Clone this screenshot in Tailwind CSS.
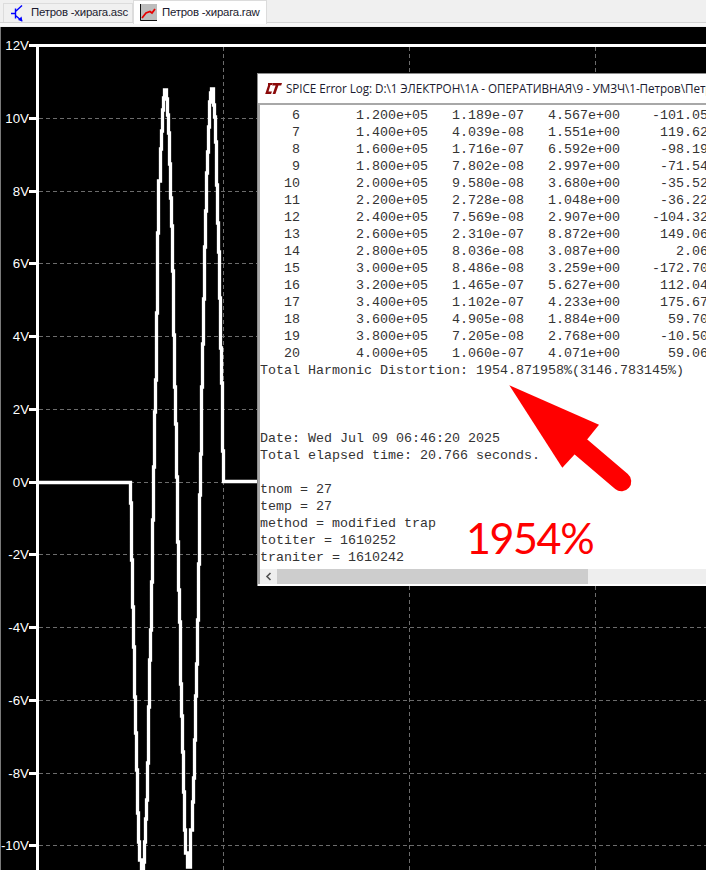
<!DOCTYPE html>
<html lang="ru">
<head>
  <meta charset="UTF-8" />
  <meta name="viewport" content="width=device-width, initial-scale=1" />
  <title>SPICE Error Log</title>
  <script src="https://cdn.jsdelivr.net/npm/@tailwindcss/browser@4"></script>
</head>
<body class="bg-black overflow-hidden">
  <div class="w-[706px] h-[870px] flex flex-col overflow-hidden">

    <!-- Tabs -->
    <div class="h-[27px] shrink-0 bg-[#f0f0f0] relative font-['Liberation_Sans',sans-serif] text-[11.4px] tracking-[-0.22px] text-[#1a1a2e]">
      <div class="flex items-start h-[23px] border-b border-[#d4d4d4]">
        <div class="mt-[3px] ml-[3px] w-[130px] h-[19px] flex items-center border border-b-0 border-[#dcdcdc] bg-[#f0f0f0]">
          <svg class="ml-[7px] w-[12px] h-[17px] shrink-0" viewBox="0 0 12 17" fill="none" stroke="#0000ff" stroke-width="1.4">
            <path d="M0 8.5H4M4.5 3.5V13.5M4.5 6.5L11 0.5M4.5 10.5L11 16" />
            <path d="M7 15L11.5 16.5L10.5 11.5Z" fill="#0000ff" stroke="none" />
          </svg>
          <span class="ml-[8px] whitespace-nowrap">Петров -хирага.asc</span>
        </div>
        <div class="w-[134px] h-[24px] flex items-center bg-white border border-b-0 border-[#dcdcdc]">
          <svg class="ml-[6px] w-[17px] h-[17px] shrink-0" viewBox="0 0 17 17" fill="none">
            <rect width="17" height="17" fill="#bdbdbd" />
            <path d="M0.5 0V16.5H17" stroke="#111" stroke-width="1" />
            <path d="M2 14L6 9L10 7.5L12 9L15 5" stroke="#e80000" stroke-width="1.8" />
          </svg>
          <span class="ml-[5px] whitespace-nowrap">Петров -хирага.raw</span>
        </div>
      </div>
      <div class="h-[3px] bg-[#f7f7f7]"></div>
    </div>

    <!-- Plot pane -->
    <div class="relative flex-1 bg-black border-l border-[#7a7a7a]">
      <svg class="absolute -left-px top-0 w-[706px] h-[843px] font-['Liberation_Sans',sans-serif]" viewBox="0 27 706 843">
        <g stroke="#6c6c6c" stroke-dasharray="4 3" shape-rendering="crispEdges">
          <path d="M39 118.5H706M39 191.5H706M39 263.5H706M39 336.5H706M39 409.5H706M39 482.5H706M39 554.5H706M39 627.5H706M39 700.5H706M39 773.5H706M39 845.5H706" />
          <path d="M223.5 47V870M409.5 47V870M595.5 47V870" />
        </g>
        <g stroke="#fff" stroke-width="3" fill="none">
          <path d="M29 45.5H706M37.5 45V870" />
          <path d="M29 118.5H37M29 191.5H37M29 263.5H37M29 336.5H37M29 409.5H37M29 482.5H37M29 554.5H37M29 627.5H37M29 700.5H37M29 773.5H37M29 845.5H37" />
          <path stroke-width="3.3" d="M38 482.5H130.5V503H131.5V560H132.5V607H133.5V647H134.5V697H135.5V733H136.5V770H137.5V813H138.5V842H139.5V860H141.5V870H143.5V862H144.5V842H145.5V819H146.5V800H147.5V763H148.5V707H149.5V660H150.5V630H151.5V582H152.5V520H153.5V467H154.5V412H155.5V380H156.5V313H157.5V233H158.5V181H160.5V149H161.5V131H162.5V110H163.5V98H164.5V90H166.5V99H167.5V115H168.5V133H169.5V164H170.5V198H171.5V226H172.5V271H173.5V335H174.5V387H175.5V424H176.5V477H177.5V542H178.5V590H179.5V622H180.5V684H181.5V716H182.5V752H183.5V792H184.5V830H185.5V853H187.5V867H190.5V830H192.5V802H193.5V778H194.5V740H195.5V696H196.5V664H197.5V620H198.5V564H199.5V495H200.5V454H201.5V387H202.5V344H203.5V299H204.5V247H205.5V211H206.5V173H207.5V152H208.5V127H209.5V102H210.5V93H211.5V89H213.5V105H214.5V117H215.5V142H216.5V185H217.5V223H218.5V252H219.5V298H220.5V348H221.5V383H222.5V451H223.5V481.5H258" />
        </g>
        <g fill="#fff" font-size="13.3" text-anchor="end">
          <text x="29" y="50">12V</text>
          <text x="29" y="123">10V</text>
          <text x="29" y="196">8V</text>
          <text x="29" y="268">6V</text>
          <text x="29" y="341">4V</text>
          <text x="29" y="414">2V</text>
          <text x="29" y="487">0V</text>
          <text x="29" y="559">-2V</text>
          <text x="29" y="632">-4V</text>
          <text x="29" y="705">-6V</text>
          <text x="29" y="778">-8V</text>
          <text x="29" y="850">-10V</text>
        </g>
      </svg>

      <!-- SPICE Error Log window -->
      <div class="absolute left-[256px] top-[46px] w-[449px] h-[513px] bg-white border-t border-l border-[#8c8c8c] flex flex-col">
        <div class="h-[29px] shrink-0 flex items-center pl-[7px] overflow-hidden">
          <svg class="w-[17px] h-[11px] shrink-0" viewBox="0 0 17 11" fill="#8b0a0a">
            <path d="M3 0H8L7 2H5.5L3.5 8.5H7L6 11H0.2L3 2.5Z" />
            <path d="M8 0H17L16.2 2.5H13.4L10.4 11H7.6L10.6 2.5H7.2Z" />
          </svg>
          <span class="ml-[4px] whitespace-nowrap font-['Open_Sans',sans-serif] text-[11.7px] tracking-[-0.06px] text-[#1a1a2e]">SPICE Error Log: D:\1 ЭЛЕКТРОН\1А - ОПЕРАТИВНАЯ\9 - УМЗЧ\1-Петров\Петров -хирага.log</span>
        </div>
        <div class="flex-1 flex flex-col min-h-0 border-t-2 border-l-2 border-[#a8a8a8] mb-[2px]">
          <pre class="flex-1 overflow-hidden pt-[2px] font-['Liberation_Mono',monospace] text-[13.33px] leading-[17px] text-[#333333]">    6       1.200e+05   1.189e-07   4.567e+00    -101.05
    7       1.400e+05   4.039e-08   1.551e+00     119.62
    8       1.600e+05   1.716e-07   6.592e+00     -98.19
    9       1.800e+05   7.802e-08   2.997e+00     -71.54
   10       2.000e+05   9.580e-08   3.680e+00     -35.52
   11       2.200e+05   2.728e-08   1.048e+00     -36.22
   12       2.400e+05   7.569e-08   2.907e+00    -104.32
   13       2.600e+05   2.310e-07   8.872e+00     149.06
   14       2.800e+05   8.036e-08   3.087e+00       2.06
   15       3.000e+05   8.486e-08   3.259e+00    -172.70
   16       3.200e+05   1.465e-07   5.627e+00     112.04
   17       3.400e+05   1.102e-07   4.233e+00     175.67
   18       3.600e+05   4.905e-08   1.884e+00      59.70
   19       3.800e+05   7.205e-08   2.768e+00     -10.50
   20       4.000e+05   1.060e-07   4.071e+00      59.06
Total Harmonic Distortion: 1954.871958%(3146.783145%)



Date: Wed Jul 09 06:46:20 2025
Total elapsed time: 20.766 seconds.

tnom = 27
temp = 27
method = modified trap
totiter = 1610252
traniter = 1610242</pre>
          <div class="h-[15px] shrink-0 flex bg-[#eeeeee]">
            <div class="w-[17px] flex items-center justify-center">
              <svg class="w-[7px] h-[9px]" viewBox="0 0 7 9" fill="none" stroke="#505050" stroke-width="1.6"><path d="M5.5 1L2 4.5L5.5 8" /></svg>
            </div>
            <div class="w-[311px] bg-[#cdcdcd]"></div>
          </div>
        </div>
      </div>

      <!-- Red annotation -->
      <svg class="absolute -left-px top-0 w-[706px] h-[843px] pointer-events-none" viewBox="0 27 706 843">
        <path d="M509.3 385.3L599 424.7L587.3 439.3L575 454L562.3 467.7Z" fill="#ff0000" />
        <path d="M581 447L621.5 481.5" stroke="#ff0000" stroke-width="19.5" stroke-linecap="round" />
      </svg>
      <span class="absolute left-[465px] top-[486px] font-['Lato',sans-serif] text-[43px] leading-[50px] tracking-[-1.4px] text-[#ff0000]">1954%</span>
    </div>
  </div>
</body>
</html>
